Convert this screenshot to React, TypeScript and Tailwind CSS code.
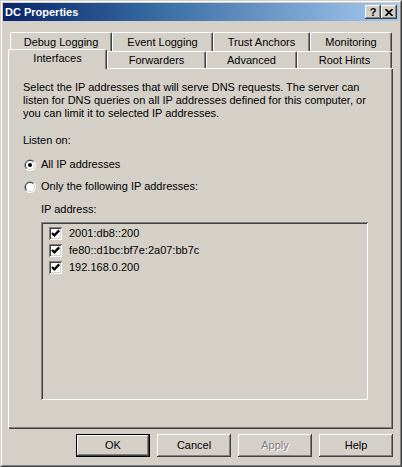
import React from "react";

const font = { fontFamily: '"Liberation Sans", Arial, sans-serif' };

const raised =
  "shadow-[inset_-1px_-1px_#404040,inset_1px_1px_#ffffff,inset_-2px_-2px_#808080,inset_2px_2px_#d4d0c8]";
const sunken =
  "shadow-[inset_1px_1px_#808080,inset_-1px_-1px_#ffffff,inset_2px_2px_#404040,inset_-2px_-2px_#d4d0c8]";

function Radio({ checked }: { checked?: boolean }) {
  return (
    <svg width="12" height="12" viewBox="0 0 12 12" className="shrink-0">
      <circle cx="6" cy="6" r="6" fill="#ffffff" />
      <path d="M1.76 10.24 A6 6 0 0 1 10.24 1.76 Z" fill="#808080" />
      <circle cx="6" cy="6" r="5" fill="#d4d0c8" />
      <path d="M2.46 9.54 A5 5 0 0 1 9.54 2.46 Z" fill="#404040" />
      <circle cx="6" cy="6" r="4" fill="#ffffff" />
      {checked && <circle cx="6" cy="6" r="2" fill="#000000" />}
    </svg>
  );
}

function Check() {
  return (
    <div className={`w-[13px] h-[13px] bg-white shrink-0 ${sunken}`}>
      <svg width="13" height="13" viewBox="0 0 13 13">
        <path d="M3 6 L5.4 8.4 L10.2 3.4" stroke="#000" strokeWidth="2.3" fill="none" />
      </svg>
    </div>
  );
}

function Tab({
  label,
  w,
  h,
  pt,
  active,
}: {
  label: string;
  w: string;
  h: string;
  pt: string;
  active?: boolean;
}) {
  return (
    <div
      className={`${w} ${h} ${pt} ${
        active ? "relative z-10 mb-[-1px]" : ""
      } shrink-0 bg-[#d4d0c8] border-l border-t border-r border-l-white border-t-white border-r-[#404040] rounded-tl-[2px] rounded-tr-[2px] shadow-[inset_-1px_0_#808080] text-center leading-[13px]`}
    >
      {label}
    </div>
  );
}

function Button({
  label,
  isDefault,
  disabled,
}: {
  label: string;
  isDefault?: boolean;
  disabled?: boolean;
}) {
  if (isDefault) {
    return (
      <div className="w-[74px] h-[23px] border border-black">
        <div
          className={`w-full h-full flex items-center justify-center ${raised}`}
        >
          {label}
        </div>
      </div>
    );
  }
  return (
    <div
      className={`w-[74px] h-[23px] flex items-center justify-center ${raised} ${
        disabled ? "text-[#808080] [text-shadow:1px_1px_#ffffff]" : ""
      }`}
    >
      {label}
    </div>
  );
}

export default function App() {
  return (
    <div
      style={font}
      className="w-[402px] h-[467px] bg-[#d4d0c8] text-[11px] leading-[13px] text-black border border-t-[#d4d0c8] border-l-[#d4d0c8] border-r-[#404040] border-b-[#404040]"
    >
      <div className="h-full border border-t-white border-l-white border-r-[#808080] border-b-[#808080] p-px flex flex-col">
        {/* Title bar */}
        <div className="h-[18px] flex items-center bg-gradient-to-r from-[#0a246a] via-[#3a6ea5] via-40% to-[#a6caf0] pl-[2px] pr-[2px]">
          <span className="font-bold text-white flex-1">DC Properties</span>
          <div
            className={`w-[16px] h-[14px] bg-[#d4d0c8] flex items-center justify-center font-bold text-[11px] ${raised}`}
          >
            ?
          </div>
          <div
            className={`w-[16px] h-[14px] bg-[#d4d0c8] flex items-center justify-center ${raised}`}
          >
            <svg width="8" height="7" viewBox="0 0 8 7">
              <path d="M0.5 0 L7.5 7 M7.5 0 L0.5 7" stroke="#000" strokeWidth="1.6" />
            </svg>
          </div>
        </div>

        {/* Tabs */}
        <div className="mt-[11px] pl-[7px] flex h-[19px]">
          <Tab label="Debug Logging" w="w-[102px]" h="h-[19px]" pt="pt-[3px]" />
          <Tab label="Event Logging" w="w-[101px]" h="h-[19px]" pt="pt-[3px]" />
          <Tab label="Trust Anchors" w="w-[97px]" h="h-[19px]" pt="pt-[3px]" />
          <Tab label="Monitoring" w="w-[82px]" h="h-[19px]" pt="pt-[3px]" />
        </div>
        <div className="pl-[5px] flex items-end h-[17px]">
          <Tab label="Interfaces" w="w-[99px]" h="h-[20px]" pt="pt-[2px]" active />
          <Tab label="Forwarders" w="w-[99px]" h="h-[17px]" pt="pt-[2px]" />
          <Tab label="Advanced" w="w-[91px]" h="h-[17px]" pt="pt-[2px]" />
          <Tab label="Root Hints" w="w-[95px]" h="h-[17px]" pt="pt-[2px]" />
        </div>

        {/* Panel */}
        <div className="ml-[5px] w-[385px] h-[361px] shadow-[inset_1px_1px_#ffffff,inset_-1px_-1px_#404040,inset_-2px_-2px_#808080] pt-[13px] pl-[15px] flex flex-col">
          <p className="whitespace-nowrap">
            Select the IP addresses that will serve DNS requests. The server can
            <br />
            listen for DNS queries on all IP addresses defined for this computer, or
            <br />
            you can limit it to selected IP addresses.
          </p>
          <p className="mt-[14px]">Listen on:</p>
          <div className="mt-[11px] flex items-center gap-[5px] pl-px">
            <Radio checked />
            <span>All IP addresses</span>
          </div>
          <div className="mt-[9px] flex items-center gap-[5px] pl-px">
            <Radio />
            <span>Only the following IP addresses:</span>
          </div>
          <div className="ml-[18px] mt-[10px]">
            <p>IP address:</p>
            <div className={`mt-[6px] w-[327px] h-[178px] pt-[3px] pl-[8px] ${sunken}`}>
              {["2001:db8::200", "fe80::d1bc:bf7e:2a07:bb7c", "192.168.0.200"].map(
                (ip) => (
                  <div key={ip} className="h-[17px] flex items-center gap-[7px]">
                    <Check />
                    <span>{ip}</span>
                  </div>
                )
              )}
            </div>
          </div>
        </div>

        {/* Buttons */}
        <div className="mt-[5px] pl-[73px] flex gap-[7px]">
          <Button label="OK" isDefault />
          <Button label="Cancel" />
          <Button label="Apply" disabled />
          <Button label="Help" />
        </div>
      </div>
    </div>
  );
}
